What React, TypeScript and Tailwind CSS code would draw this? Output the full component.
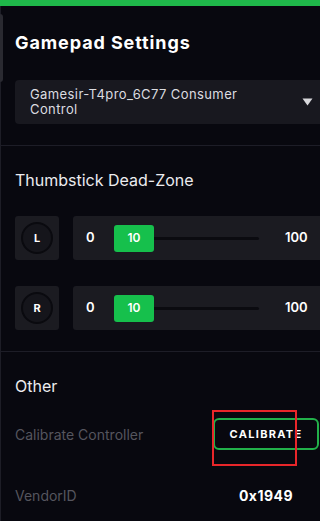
export default function App() {
  const rows = ['L', 'R'];

  return (
    <div
      className="relative w-[320px] h-[521px] overflow-hidden bg-[#08080f] text-white"
      style={{ fontFamily: 'Inter, "Noto Sans", sans-serif' }}
    >
      {/* top accent bar */}
      <div className="h-[6px] bg-[#1fb84a]" />

      {/* left edge line + scroll thumb */}
      <div className="absolute left-0 top-[6px] bottom-0 w-px bg-[#1d1d26]" />
      <div className="absolute left-0 top-[14px] h-[68px] w-[3px] rounded-r bg-[#2a2a31]" />

      <div className="pl-[15px]">
        <h1 className="mt-[27px] text-[18px] leading-[20px] font-bold tracking-[0.9px]">Gamepad Settings</h1>

        {/* device select */}
        <div className="mt-[27px] h-[44px] w-[305px] rounded-l-[4px] bg-[#18181f] flex items-center pl-[15px] pr-[7px]">
          <span className="w-[245px] text-[13px] leading-[15px] text-[#dcdce0] tracking-[0.4px]">
            Gamesir-T4pro_6C77 Consumer Control
          </span>
          <svg className="ml-auto w-[11px] h-[8px]" viewBox="0 0 11 8">
            <path d="M0.5 0.5h10l-5 7z" fill="#d8d8dc" />
          </svg>
        </div>
      </div>

      <div className="mt-[21px] h-px bg-[#1d1d27]" />

      <div className="pl-[15px]">
        <h2 className="mt-[24px] text-[16px] leading-[20px] text-[#ececef]">Thumbstick Dead-Zone</h2>

        <div className="mt-[26px] flex flex-col gap-[26px]">
          {rows.map((r) => (
            <div key={r} className="flex gap-[14px] h-[44px]">
              <div className="w-[44px] h-[44px] rounded-[3px] bg-[#1b1b21] flex items-center justify-center">
                <div className="w-[32px] h-[32px] rounded-full border-2 border-[#0a0a0f] bg-[#15151b] flex items-center justify-center text-[11px] font-bold">
                  {r}
                </div>
              </div>
              <div className="flex-1 rounded-l-[3px] bg-[#1b1b21] flex items-center pl-[13px]">
                <span className="w-[28px] text-[13px] font-semibold">0</span>
                <div className="w-[40px] h-[27px] rounded-[3px] bg-[#16c04c] flex items-center justify-center text-[12px] font-semibold">
                  10
                </div>
                <div className="w-[105px] h-[3px] bg-[#0b0b10] rounded-r" />
                <span className="ml-[26px] text-[13px] font-semibold">100</span>
              </div>
            </div>
          ))}
        </div>
      </div>

      <div className="mt-[21px] h-px bg-[#1d1d27]" />

      <div className="pl-[15px] pr-px">
        <h2 className="mt-[24px] text-[16px] leading-[20px] text-[#ececef]">Other</h2>

        <div className="mt-[22px] flex items-center">
          <span className="flex-1 text-[14px] text-[#55555e]">Calibrate Controller</span>
          <button className="w-[106px] h-[32px] rounded-[6px] border-2 border-[#22b04a] text-[11px] font-bold tracking-[1.3px] text-white">
            CALIBRATE
          </button>
        </div>

        <div className="mt-[35px] flex items-center">
          <span className="flex-1 text-[14px] text-[#55555e]">VendorID</span>
          <span className="w-[106px] text-center text-[14px] font-bold tracking-[0.5px]">0x1949</span>
        </div>
      </div>

      {/* annotation box over the button */}
      <div className="absolute left-[212px] top-[410px] w-[85px] h-[56px] border-2 border-[#e8262a]" />
    </div>
  );
}
